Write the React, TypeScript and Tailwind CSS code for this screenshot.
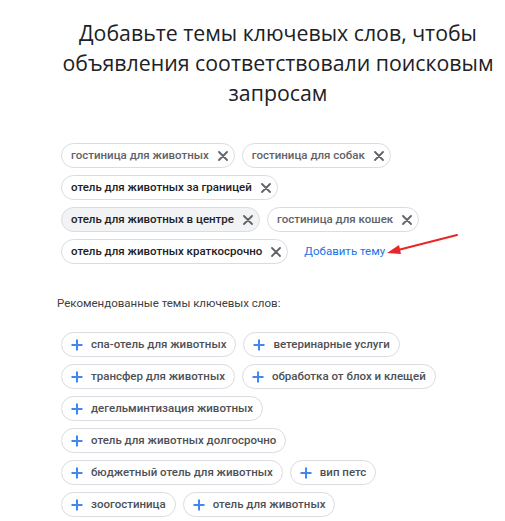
import React from 'react';

const selected: { label: string; dark?: boolean; active?: boolean }[][] = [
  [{ label: 'гостиница для животных' }, { label: 'гостиница для собак' }],
  [{ label: 'отель для животных за границей', dark: true }],
  [{ label: 'отель для животных в центре', dark: true, active: true }, { label: 'гостиница для кошек' }],
  [{ label: 'отель для животных краткосрочно', dark: true }],
];

const suggested: string[][] = [
  ['спа-отель для животных', 'ветеринарные услуги'],
  ['трансфер для животных', 'обработка от блох и клещей'],
  ['дегельминтизация животных'],
  ['отель для животных долгосрочно'],
  ['бюджетный отель для животных', 'вип петс'],
  ['зоогостиница', 'отель для животных'],
];

function CloseIcon() {
  return (
    <svg width="10" height="10" viewBox="0 0 10 10" className="shrink-0">
      <path d="M1 1L9 9M9 1L1 9" stroke="#5f6368" strokeWidth="1.8" strokeLinecap="round" />
    </svg>
  );
}

function PlusIcon() {
  return (
    <svg width="12" height="12" viewBox="0 0 12 12" className="shrink-0">
      <path d="M6 0.5V11.5M0.5 6H11.5" stroke="#4285f4" strokeWidth="2" />
    </svg>
  );
}

function Chip({ label, dark, active }: { label: string; dark?: boolean; active?: boolean }) {
  return (
    <div
      className={`flex h-[25px] items-center gap-[9px] whitespace-nowrap rounded-full border border-[#dadce0] pl-[9px] pr-[6px] text-[11.5px] font-medium ${
        dark ? 'text-[#202124]' : 'text-[#5f6368]'
      } ${active ? 'bg-[#f1f3f4]' : 'bg-white'}`}
    >
      <span>{label}</span>
      <CloseIcon />
    </div>
  );
}

function Suggestion({ label }: { label: string }) {
  return (
    <div className="flex h-[25px] items-center gap-[8px] whitespace-nowrap rounded-full border border-[#dadce0] bg-white pl-[9px] pr-[9px] text-[11.5px] font-medium text-[#4d5156]">
      <PlusIcon />
      <span>{label}</span>
    </div>
  );
}

export default function App() {
  return (
    <div className="relative min-h-[521px] w-[505px] overflow-hidden bg-white font-['Roboto',sans-serif]">
      <div className="pl-[61px] pr-[10px] pt-[18px]">
        <h1 className="whitespace-nowrap text-center font-['Open_Sans',sans-serif] text-[21.3px] font-normal leading-[30px] text-[#202124]">
          Добавьте темы ключевых слов, чтобы
          <br />
          объявления соответствовали поисковым
          <br />
          запросам
        </h1>

        <div className="mt-[35px] flex flex-col gap-[7px]">
          {selected.map((row, i) => (
            <div key={i} className="flex items-center gap-[7px]">
              {row.map((c) => (
                <Chip key={c.label} {...c} />
              ))}
              {i === selected.length - 1 && (
                <span className="ml-[9px] text-[11.5px] text-[#1a73e8]">Добавить тему</span>
              )}
            </div>
          ))}
        </div>

        <p className="-ml-[4px] mt-[31px] text-[11.5px] leading-[16px] text-[#3c4043]">Рекомендованные темы ключевых слов:</p>

        <div className="mt-[21px] flex flex-col gap-[7px]">
          {suggested.map((row, i) => (
            <div key={i} className="flex items-center gap-[7px]">
              {row.map((s) => (
                <Suggestion key={s} label={s} />
              ))}
            </div>
          ))}
        </div>
      </div>

      <svg className="pointer-events-none absolute left-0 top-0" width="505" height="521">
        <line x1="457" y1="235" x2="398" y2="250" stroke="#e8262a" strokeWidth="2" strokeLinecap="round" />
        <path d="M387 253 L399 245 L401 254 Z" fill="#e8262a" />
      </svg>
    </div>
  );
}
